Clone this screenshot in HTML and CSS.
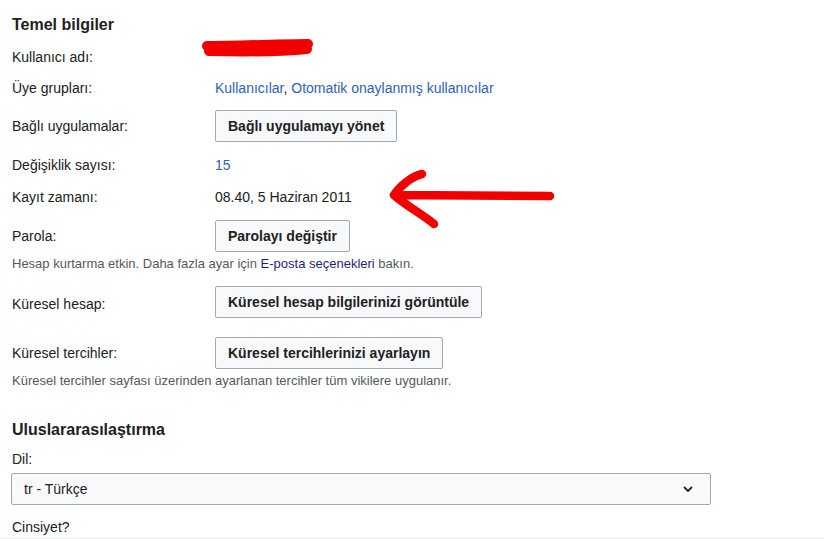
FILE: index.html
```html
<!DOCTYPE html>
<html lang="tr">
<head>
    <meta charset="UTF-8">
    <meta name="viewport" content="width=device-width, initial-scale=1.0">
    <title>Tercihler</title>
    <link rel="stylesheet" href="styles.css">
</head>
<body>
    <div class="prefs">
        <h2 class="section-title first">Temel bilgiler</h2>

        <div class="field text-row r1">
            <span class="label">Kullanıcı adı:</span>
            <span class="value"></span>
        </div>
        <div class="field text-row r2">
            <span class="label">Üye grupları:</span>
            <span class="value"><a href="#">Kullanıcılar</a>, <a href="#">Otomatik onaylanmış kullanıcılar</a></span>
        </div>
        <div class="field button-row r3">
            <span class="label">Bağlı uygulamalar:</span>
            <button class="btn">Bağlı uygulamayı yönet</button>
        </div>
        <div class="field text-row r4">
            <span class="label">Değişiklik sayısı:</span>
            <span class="value"><a href="#">15</a></span>
        </div>
        <div class="field text-row r5">
            <span class="label">Kayıt zamanı:</span>
            <span class="value">08.40, 5 Haziran 2011</span>
        </div>
        <div class="field button-row r6">
            <span class="label">Parola:</span>
            <button class="btn">Parolayı değiştir</button>
        </div>
        <p class="help h1">Hesap kurtarma etkin. Daha fazla ayar için <a href="#" class="visited">E-posta seçenekleri</a> bakın.</p>

        <div class="field button-row r7">
            <span class="label">Küresel hesap:</span>
            <button class="btn">Küresel hesap bilgilerinizi görüntüle</button>
        </div>
        <div class="field button-row r8">
            <span class="label">Küresel tercihler:</span>
            <button class="btn">Küresel tercihlerinizi ayarlayın</button>
        </div>
        <p class="help h2">Küresel tercihler sayfası üzerinden ayarlanan tercihler tüm vikilere uygulanır.</p>

        <h2 class="section-title second">Uluslararasılaştırma</h2>
        <div class="stacked-label">Dil:</div>
        <div class="dropdown">
            <span>tr - Türkçe</span>
            <svg width="12" height="12" viewBox="0 0 12 12"><path d="M2 4 L6 8 L10 4" fill="none" stroke="#202122" stroke-width="1.8"/></svg>
        </div>
        <div class="stacked-label gender">Cinsiyet?</div>
        <div class="page-end"></div>
    </div>

    <!-- red marks drawn over the page -->
    <svg class="marks" width="824" height="539" viewBox="0 0 824 539">
        <path d="M207 46 C240 46 280 44 308 44 M209 51 C250 52 285 51 307 49" fill="none" stroke="#f20000" stroke-width="10" stroke-linecap="round"/>
        <path d="M550 196 L394 195 M422 174 C412 176 400 186 394 195 C405 205 422 214 434 224" fill="none" stroke="#f20000" stroke-width="8.5" stroke-linecap="round" stroke-linejoin="round"/>
    </svg>
</body>
</html>
```

FILE: styles.css
```css
body {
    margin: 0;
    font-family: "Liberation Sans", Arial, sans-serif;
    font-size: 14px;
    color: #202122;
    background: #ffffff;
    overflow: hidden;
}

a {
    color: #2f62b7;
    text-decoration: none;
}

a.visited {
    color: #1f1f7a;
}

.prefs {
    padding: 0 0 0 12px;
}

.section-title {
    font-size: 16px;
    font-weight: bold;
    line-height: 20px;
    margin: 0;
}

.section-title.first {
    padding-top: 15px;
}

.section-title.second {
    margin-top: 31px;
}

.field {
    display: flex;
    align-items: center;
}

.text-row {
    height: 20px;
}

.button-row {
    height: 32px;
}

.label {
    width: 203px;
    flex-shrink: 0;
}

.r1 { margin-top: 12px; }
.r2 { margin-top: 11px; }
.r3 { margin-top: 12px; }
.r4 { margin-top: 13px; }
.r5 { margin-top: 12px; }
.r6 { margin-top: 13px; }
.r7 { margin-top: 14px; }
.r8 { margin-top: 19px; }

.r7 .label {
    padding-top: 3px;
}

.btn {
    height: 32px;
    padding: 0 12px;
    font-family: inherit;
    font-size: 14px;
    font-weight: bold;
    color: #202122;
    background: #f8f9fa;
    border: 1px solid #a2a9b1;
    border-radius: 2px;
}

.help {
    margin: 4px 0 0;
    font-size: 13px;
    line-height: 16px;
    color: #54595d;
}

.stacked-label {
    margin-top: 9px;
    line-height: 20px;
}

.dropdown {
    box-sizing: border-box;
    width: 700px;
    height: 32px;
    margin: 4px 0 0 -1px;
    padding: 0 16px 0 12px;
    display: flex;
    align-items: center;
    justify-content: space-between;
    background: #f8f9fa;
    border: 1px solid #a2a9b1;
    border-radius: 2px;
}

.stacked-label.gender {
    margin-top: 12px;
}

.page-end {
    margin-left: -12px;
    height: 10px;
    background: #f3f4f5;
}

.marks {
    position: absolute;
    left: 0;
    top: 0;
    pointer-events: none;
}
```
